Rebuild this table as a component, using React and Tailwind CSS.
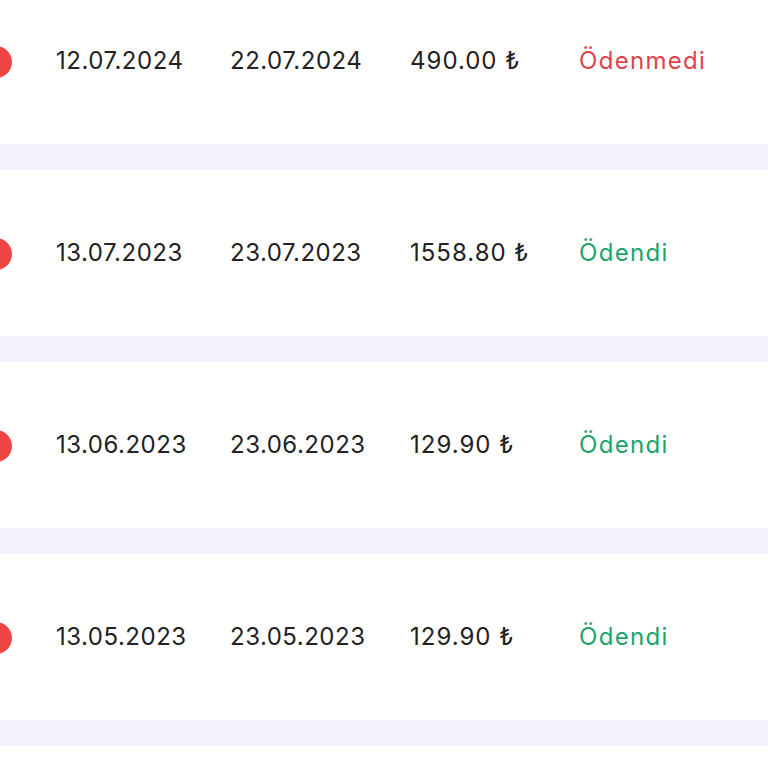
import React from "react";

const rows = [
  { d1: "12.07.2024", d2: "22.07.2024", amt: "490.00 ₺", paid: false },
  { d1: "13.07.2023", d2: "23.07.2023", amt: "1558.80 ₺", paid: true },
  { d1: "13.06.2023", d2: "23.06.2023", amt: "129.90 ₺", paid: true },
  { d1: "13.05.2023", d2: "23.05.2023", amt: "129.90 ₺", paid: true },
];

export default function App() {
  return (
    <div className="w-[768px] h-[768px] overflow-hidden bg-white" style={{ fontFamily: "Inter, 'Noto Sans', sans-serif" }}>
      <div className="-mt-[22px] flex flex-col">
        {rows.map((r, i) => (
          <div key={i} className="flex flex-col">
            <div className="h-[166px] bg-white flex items-center text-[24px] text-[#222222]">
              <div className="w-[56px] h-full flex items-center">
                <div className="w-[32px] h-[32px] rounded-full bg-[#ef4444] -ml-[20px] mt-[2px]"></div>
              </div>
              <div className="w-[174px] tracking-[0.5px]">{r.d1}</div>
              <div className="w-[180px] tracking-[0.5px]">{r.d2}</div>
              <div className="w-[169px] tracking-[1px]">{r.amt}</div>
              <div className={r.paid ? "text-[#1aa56b] tracking-[1.3px]" : "text-[#e2424c] tracking-[1.3px]"}>{r.paid ? "Ödendi" : "Ödenmedi"}</div>
            </div>
            <div className="h-[26px] bg-[#f4f3fd]"></div>
          </div>
        ))}
      </div>
    </div>
  );
}
